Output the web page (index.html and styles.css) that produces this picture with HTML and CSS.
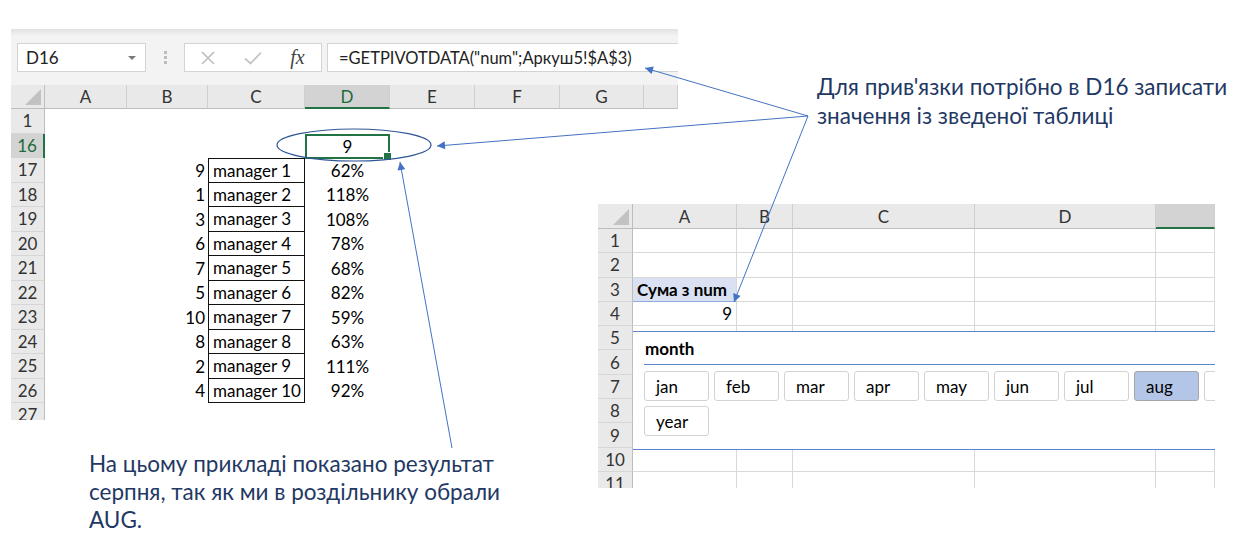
FILE: index.html
```html
<!DOCTYPE html>
<html lang="uk">
<head>
<meta charset="utf-8">
<title>GETPIVOTDATA</title>
<link rel="stylesheet" href="styles.css">
</head>
<body>
<div class="canvas">

  <div class="sheet sheet-left">
    <div class="fbar">
      <div class="namebox"><span>D16</span><i class="dd"></i></div>
      <div class="grip"></div>
      <div class="fbtns">
        <span class="fb"><svg width="14" height="14" viewBox="0 0 14 14"><path d="M1 1 L13 13 M13 1 L1 13" stroke="#bdbdbd" stroke-width="1.6" fill="none"/></svg></span>
        <span class="fb"><svg width="18" height="14" viewBox="0 0 18 14"><path d="M1 7.5 L6.5 12.5 L17 1.5" stroke="#c4c4c4" stroke-width="1.8" fill="none"/></svg></span>
        <span class="fb fx">fx</span>
      </div>
      <div class="finput">=GETPIVOTDATA("num";Аркуш5!$A$3)</div>
    </div>

    <div class="lgrid lhdr">
      <div class="corner"><i></i></div>
      <div class="ch">A</div><div class="ch">B</div><div class="ch">C</div>
      <div class="ch sel">D</div><div class="ch">E</div><div class="ch">F</div>
      <div class="ch">G</div><div class="ch"></div>
    </div>

    <div class="lgrid lrow"><div class="rh">1</div></div>
    <div class="lgrid lrow"><div class="rh sel">16</div><div class="cell colD active">9</div></div>
    <div class="lgrid lrow"><div class="rh">17</div><div class="cell colB num">9</div><div class="cell colC mgr first">manager 1</div><div class="cell colD pct">62%</div></div>
    <div class="lgrid lrow"><div class="rh">18</div><div class="cell colB num">1</div><div class="cell colC mgr">manager 2</div><div class="cell colD pct">118%</div></div>
    <div class="lgrid lrow"><div class="rh">19</div><div class="cell colB num">3</div><div class="cell colC mgr">manager 3</div><div class="cell colD pct">108%</div></div>
    <div class="lgrid lrow"><div class="rh">20</div><div class="cell colB num">6</div><div class="cell colC mgr">manager 4</div><div class="cell colD pct">78%</div></div>
    <div class="lgrid lrow"><div class="rh">21</div><div class="cell colB num">7</div><div class="cell colC mgr">manager 5</div><div class="cell colD pct">68%</div></div>
    <div class="lgrid lrow"><div class="rh">22</div><div class="cell colB num">5</div><div class="cell colC mgr">manager 6</div><div class="cell colD pct">82%</div></div>
    <div class="lgrid lrow"><div class="rh">23</div><div class="cell colB num">10</div><div class="cell colC mgr">manager 7</div><div class="cell colD pct">59%</div></div>
    <div class="lgrid lrow"><div class="rh">24</div><div class="cell colB num">8</div><div class="cell colC mgr">manager 8</div><div class="cell colD pct">63%</div></div>
    <div class="lgrid lrow"><div class="rh">25</div><div class="cell colB num">2</div><div class="cell colC mgr">manager 9</div><div class="cell colD pct">111%</div></div>
    <div class="lgrid lrow"><div class="rh">26</div><div class="cell colB num">4</div><div class="cell colC mgr">manager 10</div><div class="cell colD pct">92%</div></div>
    <div class="lgrid lrow"><div class="rh">27</div></div>
  </div>

  <div class="sheet sheet-right">
    <div class="rgrid rhdr">
      <div class="corner"><i></i></div>
      <div class="ch">A</div><div class="ch">B</div><div class="ch">C</div><div class="ch">D</div><div class="ch sel"></div>
    </div>
    <div class="rgrid rbody">
      <div class="rh">1</div><div class="g"></div><div class="g"></div><div class="g"></div><div class="g"></div><div class="g"></div>
      <div class="rh">2</div><div class="g"></div><div class="g"></div><div class="g"></div><div class="g"></div><div class="g"></div>
      <div class="rh">3</div><div class="g pvh">Сума з num</div><div class="g"></div><div class="g"></div><div class="g"></div><div class="g"></div>
      <div class="rh">4</div><div class="g pvv">9</div><div class="g"></div><div class="g"></div><div class="g"></div><div class="g"></div>
      <div class="rh">5</div><div class="g"></div><div class="g"></div><div class="g"></div><div class="g"></div><div class="g"></div>
      <div class="rh">6</div><div class="g"></div><div class="g"></div><div class="g"></div><div class="g"></div><div class="g"></div>
      <div class="rh">7</div><div class="g"></div><div class="g"></div><div class="g"></div><div class="g"></div><div class="g"></div>
      <div class="rh">8</div><div class="g"></div><div class="g"></div><div class="g"></div><div class="g"></div><div class="g"></div>
      <div class="rh">9</div><div class="g"></div><div class="g"></div><div class="g"></div><div class="g"></div><div class="g"></div>
      <div class="rh">10</div><div class="g"></div><div class="g"></div><div class="g"></div><div class="g"></div><div class="g"></div>
      <div class="rh">11</div><div class="g"></div><div class="g"></div><div class="g"></div><div class="g"></div><div class="g"></div>
    </div>

    <div class="slicer">
      <div class="sl-head">month</div>
      <div class="sl-items">
        <div class="sl-btn">jan</div><div class="sl-btn">feb</div><div class="sl-btn">mar</div>
        <div class="sl-btn">apr</div><div class="sl-btn">may</div><div class="sl-btn">jun</div>
        <div class="sl-btn">jul</div><div class="sl-btn on">aug</div><div class="sl-btn"></div>
        <div class="sl-btn">year</div>
      </div>
    </div>
  </div>

  <p class="note note-top">Для прив'язки потрібно в D16 записати<br>значення із зведеної таблиці</p>
  <p class="note note-bottom">На цьому прикладі показано результат<br>серпня, так як ми в роздільнику обрали<br>AUG.</p>

  <svg class="arrows" width="1258" height="540" viewBox="0 0 1258 540">
    <defs>
      <marker id="ah" viewBox="0 0 10 10" refX="10" refY="5" markerWidth="10" markerHeight="8" orient="auto" markerUnits="userSpaceOnUse">
        <path d="M0,0 L10,5 L0,10 z" fill="#4472c4"/>
      </marker>
    </defs>
    <ellipse cx="354" cy="145" rx="77" ry="16" fill="none" stroke="#2f5597" stroke-width="1.2"/>
    <line x1="808" y1="116" x2="645" y2="68" stroke="#4472c4" stroke-width="1" marker-end="url(#ah)"/>
    <line x1="808" y1="116" x2="437" y2="146" stroke="#4472c4" stroke-width="1" marker-end="url(#ah)"/>
    <line x1="808" y1="116" x2="734" y2="302" stroke="#4472c4" stroke-width="1" marker-end="url(#ah)"/>
    <line x1="452" y1="448" x2="400" y2="162" stroke="#4472c4" stroke-width="1" marker-end="url(#ah)"/>
  </svg>
</div>
</body>
</html>
```

FILE: styles.css
```css
* { box-sizing: border-box; }
html, body { margin: 0; padding: 0; background: #fff; }
body { font-family: "Lato", "Noto Sans", sans-serif; color: #000; }

.canvas { position: relative; width: 1258px; height: 540px; overflow: hidden; }

.sheet { position: absolute; overflow: hidden; background: #fff; font-size: 17px; }
.sheet-left { left: 11px; top: 29px; width: 667px; height: 391px; }
.sheet-right { left: 598px; top: 204px; width: 617px; height: 284px; }

/* formula bar */
.fbar {
  height: 56px;
  display: flex;
  align-items: flex-start;
  padding: 14px 0 0 6px;
  background: linear-gradient(#e2e2e2, #f3f3f3 7px);
}
.namebox {
  width: 129px; height: 29px;
  border: 1px solid #d4d4d4; background: #fff;
  display: flex; align-items: center; justify-content: space-between;
  padding: 0 9px 0 8px; color: #222;
}
.dd { width: 0; height: 0; border-left: 4px solid transparent; border-right: 4px solid transparent; border-top: 4px solid #7a7a7a; }
.grip {
  width: 3px; height: 14px; margin: 8px 0 0 18px;
  background: repeating-linear-gradient(#bcbcbc 0 3px, transparent 3px 5px);
}
.fbtns {
  width: 138px; height: 29px; margin-left: 17px;
  border: 1px solid #d4d4d4; background: #fff;
  display: flex; align-items: center;
}
.fb { width: 45px; display: flex; justify-content: center; align-items: center; }
.fx { font-family: "Liberation Serif", serif; font-style: italic; font-size: 20px; color: #444; }
.finput {
  flex: 1; height: 29px; margin-left: 5px;
  border: 1px solid #d4d4d4; border-right: none; background: #fff;
  display: flex; align-items: center; padding-left: 11px;
  white-space: nowrap; color: #222; font-size: 16.5px;
}

/* headers */
.ch {
  background: #e9e9e9; border-right: 1px solid #cfcfcf; border-bottom: 1px solid #bdbdbd;
  display: flex; align-items: center; justify-content: center; color: #333;
}
.ch.sel { background: #d3d3d3; border-bottom: 2px solid #217346; color: #1d6a3d; }
.corner { background: #e9e9e9; border-right: 1px solid #bdbdbd; border-bottom: 1px solid #bdbdbd; position: relative; }
.corner i {
  position: absolute; right: 3px; bottom: 3px; width: 0; height: 0;
  border-left: 16px solid transparent; border-bottom: 16px solid #c2c2c2;
}
.rh {
  background: #e9e9e9; border-right: 1px solid #bdbdbd; border-bottom: 1px solid #d6d6d6;
  display: flex; align-items: center; justify-content: center; color: #333;
}
.rh.sel { background: #d3d3d3; border-right: 2px solid #217346; color: #1d6a3d; }

/* left grid */
.lgrid { display: grid; grid-template-columns: 34px 82px 81px 97px 85px 85px 85px 84px 1fr; }
.lhdr { height: 24px; }
.lrow { height: 24.5px; }
.lrow .rh { grid-column: 1; }
.cell { display: flex; align-items: center; white-space: nowrap; }
.colB { grid-column: 3; }
.colC { grid-column: 4; }
.colD { grid-column: 5; }
.num { justify-content: flex-end; padding-right: 3px; }
.mgr { border: 1px solid #111; border-top: none; padding-left: 4px; }
.mgr.first { border-top: 1px solid #111; }
.pct { justify-content: center; }
.active { justify-content: center; border: 2px solid #217346; position: relative; }
.active::after {
  content: ""; position: absolute; right: -4px; bottom: -4px; width: 7px; height: 7px;
  background: #217346; border: 1px solid #fff;
}

/* right grid */
.rgrid { display: grid; grid-template-columns: 35px 104px 56px 182px 181px 1fr; }
.rhdr { height: 25px; }
.rbody { grid-auto-rows: 24.3px; }
.g { border-right: 1px solid #d9d9d9; border-bottom: 1px solid #d9d9d9; display: flex; align-items: center; white-space: nowrap; }
.pvh { background: #d9e1f2; border-bottom: 1px solid #8ea9db; font-weight: 700; padding-left: 4px; }
.pvv { justify-content: flex-end; padding-right: 4px; }

/* slicer */
.slicer {
  position: absolute; left: 35px; top: 127px; width: 600px; height: 119px;
  background: #fff; border-top: 1.5px solid #5b84cf; border-bottom: 1.5px solid #5b84cf;
  padding-left: 11px; overflow: hidden;
}
.sl-head {
  height: 33px; border-bottom: 1.5px solid #5b84cf;
  display: flex; align-items: center; font-weight: 700; padding-left: 1px;
}
.sl-items {
  display: grid; grid-template-columns: repeat(9, 65px); grid-auto-rows: 30px;
  column-gap: 5px; row-gap: 5px; margin-top: 6px;
}
.sl-btn {
  border: 1px solid #d3d3d3; border-radius: 3px; background: #fff;
  display: flex; align-items: center; padding-left: 11px; white-space: nowrap;
}
.sl-btn.on { background: #b4c6e7; border-color: #a6a6a6; }

/* notes */
.note { position: absolute; margin: 0; color: #1f3864; font-size: 22.5px; line-height: 29px; white-space: nowrap; }
.note-top { left: 817px; top: 72px; }
.note-bottom { left: 89px; top: 450px; line-height: 28px; }

.arrows { position: absolute; left: 0; top: 0; pointer-events: none; }
```
